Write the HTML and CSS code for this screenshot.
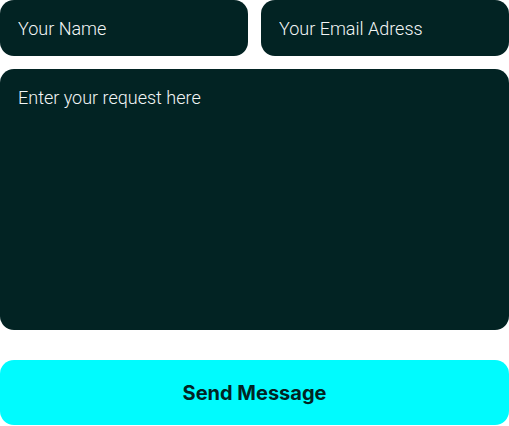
FILE: index.html
```html
<!DOCTYPE html>
<html>
<head>
<meta charset="utf-8">
<link rel="stylesheet" href="styles.css">
</head>
<body>
<form class="contact">
  <div class="row">
    <input class="field" type="text" placeholder="Your Name">
    <input class="field" type="email" placeholder="Your Email Adress">
  </div>
  <textarea class="field area" placeholder="Enter your request here"></textarea>
  <button class="send" type="button">Send Message</button>
</form>
</body>
</html>
```
FILE: styles.css
```css
html, body {
  margin: 0;
  padding: 0;
  background: #ffffff;
}
.contact {
  width: 509px;
  display: flex;
  flex-direction: column;
}
.row {
  display: grid;
  grid-template-columns: 248px 248px;
  column-gap: 13px;
}
.field {
  box-sizing: border-box;
  height: 56px;
  border: none;
  outline: none;
  border-radius: 14px;
  background: #022323;
  color: #f2f6f6;
  font-family: Roboto, "Liberation Sans", sans-serif;
  font-weight: 300;
  font-size: 18px;
  padding: 0 18px;
  margin: 0;
}
.field::placeholder {
  color: #f2f6f6;
  opacity: 1;
}
.area {
  margin-top: 13px;
  height: 261px;
  width: 509px;
  resize: none;
  padding: 18px 18px;
  line-height: 22px;
  display: block;
}
.send {
  margin-top: 30px;
  height: 65px;
  width: 509px;
  border: none;
  border-radius: 14px;
  background: #00fbfe;
  color: #022323;
  font-family: Inter, "Liberation Sans", sans-serif;
  font-weight: 700;
  font-size: 20px;
  padding: 0;
}
```
